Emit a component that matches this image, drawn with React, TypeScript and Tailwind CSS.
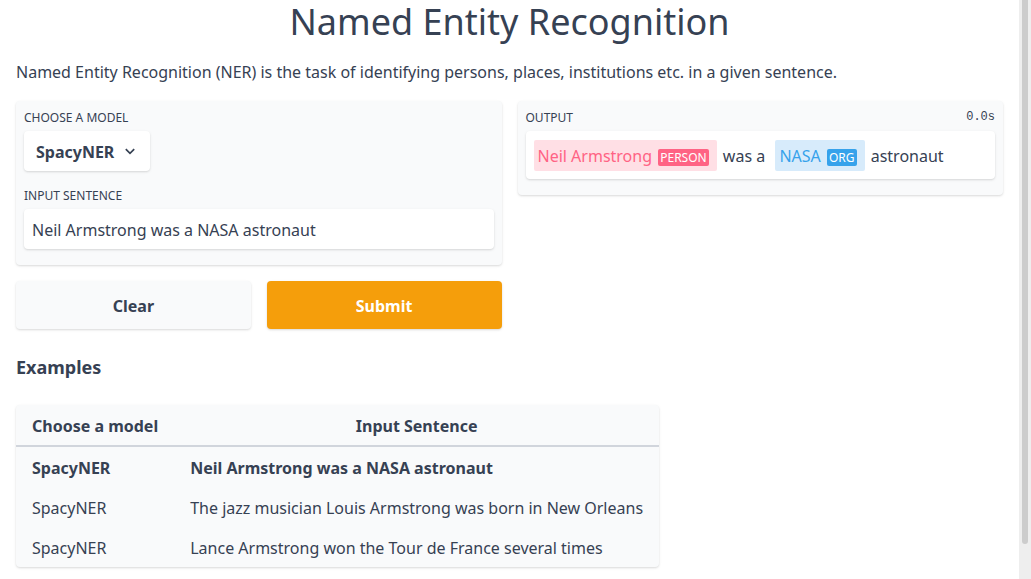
import { useState } from "react";

const examples = [
  { model: "SpacyNER", sentence: "Neil Armstrong was a NASA astronaut" },
  { model: "SpacyNER", sentence: "The jazz musician Louis Armstrong was born in New Orleans" },
  { model: "SpacyNER", sentence: "Lance Armstrong won the Tour de France several times" },
];

const shadow = "shadow-[0_1px_3px_rgba(0,0,0,0.1),0_1px_2px_rgba(0,0,0,0.06)]";
const panel = `rounded-sm bg-gray-50 px-2 pt-[9px] pb-4 ${shadow}`;
const cell = "px-4 pt-[9px] pb-[7px]";

function Chevron() {
  return (
    <svg
      className="pointer-events-none absolute top-4 right-[15px] h-2.5 w-2.5"
      viewBox="0 0 10 10"
      fill="none"
      stroke="currentColor"
      strokeWidth="1.7"
      aria-hidden="true"
    >
      <path d="M0.8 2.2L5 6.4l4.2-4.2" />
    </svg>
  );
}

function Entity({ text, label, tone }: { text: string; label: string; tone: "pink" | "blue" }) {
  const pink = tone === "pink";
  return (
    <span
      className={
        pink
          ? "rounded-xs bg-[#ffdfe5] px-1 pt-[5px] pb-1 text-[#ff6384]"
          : "rounded-xs bg-[#d7ebfb] px-1 pt-[5px] pb-1 text-[#36a2eb]"
      }
    >
      {text}{" "}
      <span
        className={
          pink
            ? "ml-0.5 rounded-xs bg-[#ff6384] px-0.5 text-xs text-white"
            : "ml-0.5 rounded-xs bg-[#36a2eb] px-0.5 text-xs text-white"
        }
      >
        {label}
      </span>{" "}
    </span>
  );
}

export default function App() {
  const [selected, setSelected] = useState(0);
  const [sentence, setSentence] = useState(examples[0].sentence);

  return (
    <div className="flex min-h-screen bg-white font-['Noto_Sans',sans-serif] text-base text-gray-700">
      <main className="min-w-0 flex-1 px-4 pt-0.5 pb-3">
        <h1 className="text-center text-4xl">Named Entity Recognition</h1>
        <p className="mt-[18px]">
          Named Entity Recognition (NER) is the task of identifying persons, places, institutions
          etc. in a given sentence.
        </p>

        <div className="mt-4 grid grid-cols-2 items-start gap-4 pt-px">
          <div>
            <section className={`flex flex-col gap-[17px] ${panel}`}>
              <div className="flex flex-col items-start gap-[5px]">
                <label htmlFor="model" className="text-xs uppercase">
                  Choose a model
                </label>
                <div className={`relative rounded-sm bg-white ${shadow}`}>
                  <select
                    id="model"
                    className="block h-10 appearance-none rounded-sm pt-0.5 pr-[35px] pl-3 font-bold"
                  >
                    <option>SpacyNER</option>
                  </select>
                  <Chevron />
                </div>
              </div>
              <div className="flex flex-col gap-[5px]">
                <label htmlFor="sentence" className="text-xs uppercase">
                  Input Sentence
                </label>
                <input
                  id="sentence"
                  type="text"
                  value={sentence}
                  onChange={(e) => setSentence(e.target.value)}
                  className={`h-10 w-full rounded-sm bg-white px-2 pt-0.5 ${shadow}`}
                />
              </div>
            </section>
            <div className="mt-4 grid grid-cols-2 gap-4">
              <button
                type="button"
                onClick={() => setSentence("")}
                className={`h-12 rounded-sm bg-gray-50 pt-0.5 font-bold ${shadow}`}
              >
                Clear
              </button>
              <button
                type="button"
                className={`h-12 rounded-sm bg-[#f59e0b] pt-0.5 font-bold text-white ${shadow}`}
              >
                Submit
              </button>
            </div>
          </div>

          <section className={panel}>
            <div className="flex h-4 items-start justify-between text-xs">
              <h2 className="uppercase">Output</h2>
              <span className="font-['Liberation_Mono',monospace] leading-[14px]">0.0s</span>
            </div>
            <div className={`mt-[5px] rounded-sm bg-white px-2 pt-[13px] pb-[11px] ${shadow}`}>
              <Entity text="Neil Armstrong" label="PERSON" tone="pink" />
              <span className="px-1.5">was a </span>
              <Entity text="NASA" label="ORG" tone="blue" />
              <span className="px-1.5">astronaut</span>
            </div>
          </section>
        </div>

        <h2 className="mt-6 text-lg font-bold">Examples</h2>
        <table className={`mt-6 w-fit rounded-sm bg-gray-50 ${shadow}`}>
          <thead>
            <tr className="border-b-2 border-gray-300">
              <th className={`text-center font-bold ${cell}`}>Choose a model</th>
              <th className={`text-center font-bold ${cell}`}>Input Sentence</th>
            </tr>
          </thead>
          <tbody>
            {examples.map((example, i) => (
              <tr
                key={example.sentence}
                onClick={() => {
                  setSelected(i);
                  setSentence(example.sentence);
                }}
                className={i === selected ? "cursor-pointer font-bold" : "cursor-pointer"}
              >
                <td className={cell}>{example.model}</td>
                <td className={cell}>{example.sentence}</td>
              </tr>
            ))}
          </tbody>
        </table>
      </main>

      <div className="flex w-3 shrink-0 justify-center bg-[#eeeeee]" aria-hidden="true">
        <div className="h-[94vh] w-1.5 rounded-b-full bg-[#cccccc]" />
      </div>
    </div>
  );
}
